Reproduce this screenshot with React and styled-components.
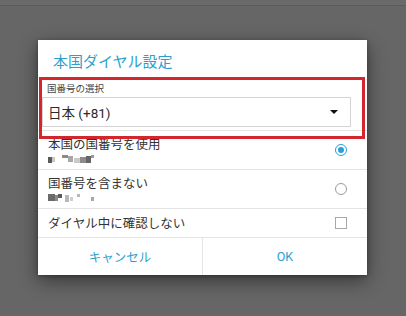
import React from "react"
import styled, { createGlobalStyle } from "styled-components"

const GlobalStyle = createGlobalStyle`
  html, body {
    margin: 0;
    padding: 0;
    background: #666666;
  }
  body {
    font-family: Roboto, "Noto Sans CJK JP", sans-serif;
  }
`

const Screen = styled.div`
  width: 406px;
  height: 316px;
  background: #666666;
  display: flex;
  flex-direction: column;
  overflow: hidden;
`

const StatusStrip = styled.div`
  height: 5px;
  background: #6a6a6a;
  border-bottom: 1px solid #5b5b5b;
`

const Dialog = styled.div`
  position: relative;
  width: 329px;
  margin: 34px 0 0 38px;
  background: #ffffff;
  box-shadow: 0 6px 18px rgba(0, 0, 0, 0.45), 0 1px 4px rgba(0, 0, 0, 0.3);
  display: flex;
  flex-direction: column;
`

const Title = styled.div`
  height: 37px;
  padding: 13px 0 0 15px;
  box-sizing: border-box;
  font-size: 15px;
  line-height: 18px;
  color: #2e9fcd;
`

const Highlight = styled.div`
  position: absolute;
  left: 1px;
  top: 37px;
  width: 326px;
  height: 62px;
  border: 3px solid #d3262d;
  box-sizing: border-box;
  pointer-events: none;
`

const SelectSection = styled.div`
  padding: 6px 16px 3px 4px;
  border-bottom: 1px solid #e4e4e4;
  display: flex;
  flex-direction: column;
  gap: 2px;
`

const SmallLabel = styled.div`
  padding-left: 5px;
  font-size: 9.5px;
  line-height: 12px;
  color: #444;
`

const SelectBox = styled.div`
  height: 30px;
  box-sizing: border-box;
  border: 1px solid #d4d4d4;
  display: flex;
  align-items: center;
  justify-content: space-between;
  padding: 0 12px 0 5px;
  font-size: 13.5px;
  color: #2a2a2a;
`

const Arrow = styled.span`
  width: 0;
  height: 0;
  border-left: 4px solid transparent;
  border-right: 4px solid transparent;
  border-top: 4.5px solid #111;
  margin-top: 0;
`

const Row = styled.div`
  height: ${(p) => p.$h}px;
  box-sizing: border-box;
  border-bottom: 1px solid #e4e4e4;
  display: flex;
  align-items: center;
  justify-content: space-between;
  padding: 0 19px 0 10px;
`

const RowText = styled.div`
  display: flex;
  flex-direction: column;
  gap: 3px;
  margin-top: ${(p) => p.$mt || 0}px;
`

const RowTitle = styled.div`
  font-size: 12.5px;
  line-height: 15px;
  color: #333;
`

const Mosaic = styled.div`
  display: flex;
  align-items: flex-start;
  height: 8px;
`

const Block = styled.span`
  display: block;
  width: ${(p) => p.$w}px;
  height: ${(p) => p.$h || 6}px;
  margin-left: ${(p) => p.$gap || 0}px;
  margin-top: ${(p) => p.$top || 0}px;
  background: ${(p) => p.$c};
`

const Radio = styled.span`
  width: 12px;
  height: 12px;
  box-sizing: border-box;
  border-radius: 50%;
  border: 1.5px solid ${(p) => (p.$on ? "#2a9fd8" : "#9a9a9a")};
  display: flex;
  align-items: center;
  justify-content: center;
  margin-right: 1px;

  &::after {
    content: "";
    width: 6px;
    height: 6px;
    border-radius: 50%;
    background: ${(p) => (p.$on ? "#2a9fd8" : "transparent")};
  }
`

const Checkbox = styled.span`
  width: 12px;
  height: 12px;
  box-sizing: border-box;
  border: 1px solid #a8a8a8;
  margin-right: 1px;
`

const ButtonBar = styled.div`
  height: 37px;
  display: flex;
`

const DialogButton = styled.div`
  flex: 1;
  display: flex;
  align-items: center;
  justify-content: center;
  font-size: 12.5px;
  color: #2e9fcd;
  & + & {
    border-left: 1px solid #e4e4e4;
  }
`

const mosaicOne = [
  { w: 4, c: "#5a5a5a", gap: 0, h: 6, top: 2 },
  { w: 3, c: "#c8c8c8", gap: 0, h: 5, top: 2 },
  { w: 6, c: "#8a8a8a", gap: 7, h: 3, top: 0 },
  { w: 5, c: "#a8a8a8", gap: 0, h: 6, top: 1 },
  { w: 6, c: "#cacaca", gap: 1, h: 5, top: 3 },
  { w: 6, c: "#8c8c8c", gap: 0, h: 6, top: 2 },
  { w: 5, c: "#666666", gap: 0, h: 7, top: 1 },
  { w: 3, c: "#9a9a9a", gap: 0, h: 3, top: 0 },
]

const mosaicTwo = [
  { w: 7, c: "#6a6a6a", gap: 0, h: 7, top: 0 },
  { w: 3, c: "#8a8a8a", gap: 0, h: 6, top: 1 },
  { w: 4, c: "#5c5c5c", gap: 0, h: 4, top: 0 },
  { w: 4, c: "#b8b8b8", gap: 3, h: 7, top: 1 },
  { w: 3, c: "#cfcfcf", gap: 1, h: 4, top: 3 },
  { w: 3, c: "#b8b8b8", gap: 4, h: 3, top: 0 },
  { w: 3, c: "#a8a8a8", gap: 11, h: 4, top: 3 },
]

const MosaicLine = ({ blocks }) => (
  <Mosaic>
    {blocks.map((b, i) => (
      <Block key={i} $w={b.w} $c={b.c} $gap={b.gap} $h={b.h} $top={b.top} />
    ))}
  </Mosaic>
)

const App = () => {
  return (
    <>
      <GlobalStyle />
      <Screen>
        <StatusStrip />
        <Dialog>
          <Title>本国ダイヤル設定</Title>
          <SelectSection>
            <SmallLabel>国番号の選択</SmallLabel>
            <SelectBox>
              <span>日本 (+81)</span>
              <Arrow />
            </SelectBox>
          </SelectSection>
          <Row $h={39}>
            <RowText $mt={0}>
              <RowTitle>本国の国番号を使用</RowTitle>
              <MosaicLine blocks={mosaicOne} />
            </RowText>
            <Radio $on />
          </Row>
          <Row $h={39}>
            <RowText $mt={-1}>
              <RowTitle>国番号を含まない</RowTitle>
              <MosaicLine blocks={mosaicTwo} />
            </RowText>
            <Radio />
          </Row>
          <Row $h={29}>
            <RowTitle>ダイヤル中に確認しない</RowTitle>
            <Checkbox />
          </Row>
          <ButtonBar>
            <DialogButton>キャンセル</DialogButton>
            <DialogButton>OK</DialogButton>
          </ButtonBar>
          <Highlight />
        </Dialog>
      </Screen>
    </>
  )
}

export default App
